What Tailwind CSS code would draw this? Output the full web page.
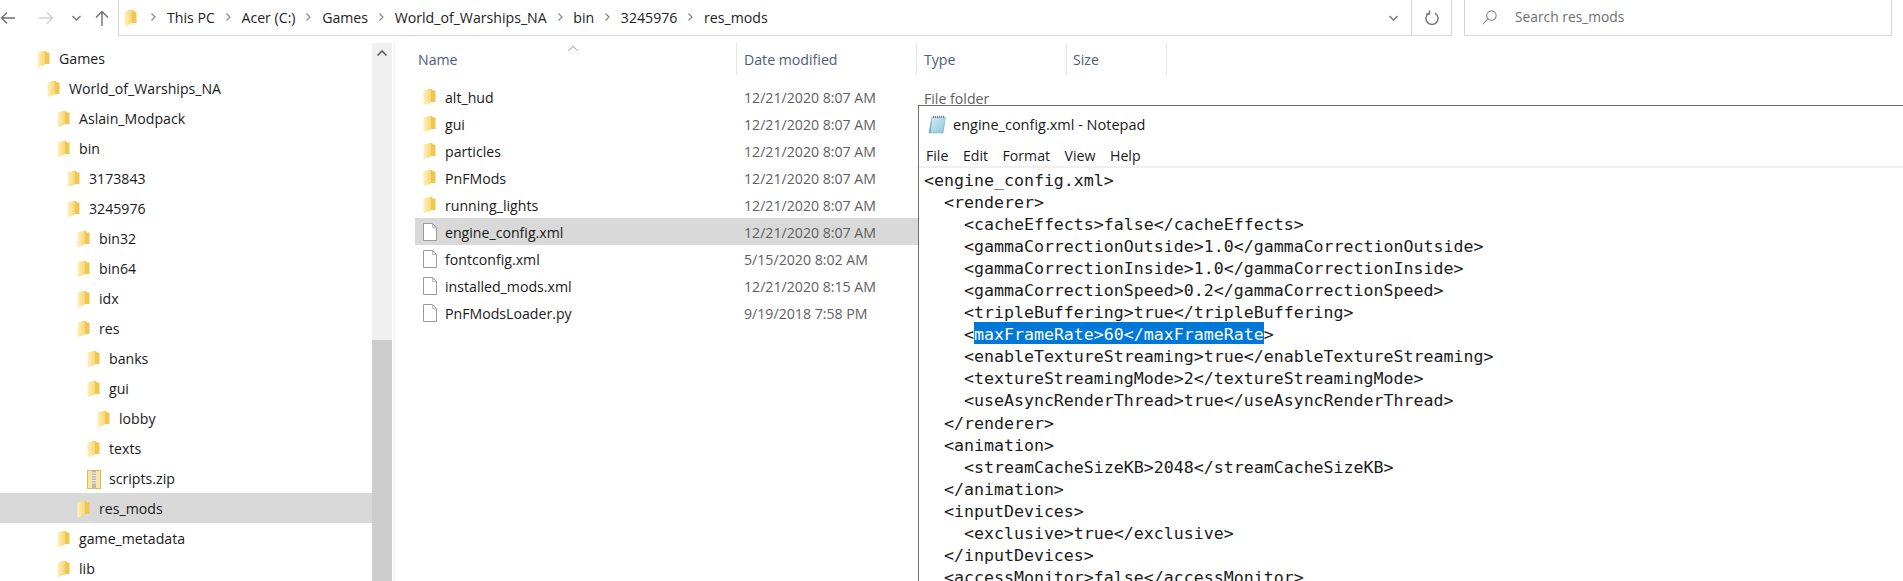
<!DOCTYPE html>
<html lang="en">
<head>
<meta charset="utf-8">
<title>res_mods</title>
<script src="https://cdn.jsdelivr.net/npm/@tailwindcss/browser@4"></script>
</head>
<body class="m-0 bg-white overflow-hidden">
<svg width="0" height="0" class="absolute">
  <defs>
    <linearGradient id="fg" x1="0" y1="0" x2="1" y2="0"><stop offset="0" stop-color="#fff0bf"/><stop offset="1" stop-color="#f8d670"/></linearGradient>
    <linearGradient id="nb" x1="0" y1="0" x2="1" y2="1"><stop offset="0" stop-color="#d4eef8"/><stop offset="1" stop-color="#8fc7dc"/></linearGradient>
    <symbol id="folder" viewBox="0 0 13 18"><path d="M7 1 H9 L10 2.5 H12.5 V14 H7 Z" fill="#f1c552"/><path d="M0.5 2.5 L8 0.5 V14.5 L0.5 17.5 Z" fill="url(#fg)"/></symbol>
    <symbol id="file" viewBox="0 0 14 18"><path d="M0.5 0.5 H9.5 L13.5 4.5 V17.5 H0.5 Z" fill="#fff" stroke="#9a9a9a"/><path d="M9.5 0.5 V4.5 H13.5" fill="none" stroke="#bdbdbd"/></symbol>
  </defs>
</svg>
<div class="relative w-[1903px] h-[581px] overflow-hidden font-['Open_Sans','Noto_Sans',sans-serif] text-[14.15px] text-[#1a1a1a]">
  <header class="flex h-[36px] items-center">
    <div class="flex items-center w-[118px] h-full shrink-0">
      <svg class="w-[16px] h-[14px]" viewBox="0 0 16 14" fill="none" stroke="#6d6d6d" stroke-width="1.3"><path d="M15 7H1.5M7 1.5L1.5 7L7 12.5"/></svg>
      <svg class="ml-[22px] w-[16px] h-[14px]" viewBox="0 0 16 14" fill="none" stroke="#cfcfcf" stroke-width="1.3"><path d="M1 7H14.5M9 1.5L14.5 7L9 12.5"/></svg>
      <svg class="ml-[18px] w-[9px] h-[6px]" viewBox="0 0 9 6" fill="none" stroke="#777" stroke-width="1.4"><path d="M0.5 1L4.5 5L8.5 1"/></svg>
      <svg class="ml-[14px] w-[14px] h-[16px]" viewBox="0 0 14 16" fill="none" stroke="#6d6d6d" stroke-width="1.4"><path d="M7 16V1.5M1 7.5L7 1.5L13 7.5"/></svg>
    </div>
    <div class="flex items-center w-[1334px] h-full border-b border-l border-r border-[#d6d6d6] shrink-0">
      <svg class="ml-[5px] w-[13px] h-[18px] shrink-0"><use href="#folder"/></svg>
      <nav class="flex items-center flex-1 text-[#222]">
        <svg class="ml-[14px] mr-[11px] w-[5px] h-[8px] shrink-0" viewBox="0 0 5 8" fill="none" stroke="#888" stroke-width="1.2"><path d="M0.5 0.5L4 4L0.5 7.5"/></svg><span>This PC</span>
        <svg class="mx-[10.8px] w-[5px] h-[8px] shrink-0" viewBox="0 0 5 8" fill="none" stroke="#888" stroke-width="1.2"><path d="M0.5 0.5L4 4L0.5 7.5"/></svg><span>Acer (C:)</span>
        <svg class="mx-[10.8px] w-[5px] h-[8px] shrink-0" viewBox="0 0 5 8" fill="none" stroke="#888" stroke-width="1.2"><path d="M0.5 0.5L4 4L0.5 7.5"/></svg><span>Games</span>
        <svg class="mx-[10.8px] w-[5px] h-[8px] shrink-0" viewBox="0 0 5 8" fill="none" stroke="#888" stroke-width="1.2"><path d="M0.5 0.5L4 4L0.5 7.5"/></svg><span>World_of_Warships_NA</span>
        <svg class="mx-[10.8px] w-[5px] h-[8px] shrink-0" viewBox="0 0 5 8" fill="none" stroke="#888" stroke-width="1.2"><path d="M0.5 0.5L4 4L0.5 7.5"/></svg><span>bin</span>
        <svg class="mx-[10.8px] w-[5px] h-[8px] shrink-0" viewBox="0 0 5 8" fill="none" stroke="#888" stroke-width="1.2"><path d="M0.5 0.5L4 4L0.5 7.5"/></svg><span>3245976</span>
        <svg class="mx-[10.8px] w-[5px] h-[8px] shrink-0" viewBox="0 0 5 8" fill="none" stroke="#888" stroke-width="1.2"><path d="M0.5 0.5L4 4L0.5 7.5"/></svg><span>res_mods</span>
      </nav>
      <svg class="mr-[13px] w-[9px] h-[6px]" viewBox="0 0 9 6" fill="none" stroke="#777" stroke-width="1.4"><path d="M0.5 1L4.5 5L8.5 1"/></svg>
      <div class="flex items-center justify-center w-[40px] h-full border-l border-[#d6d6d6]">
        <svg class="w-[14px] h-[15px]" viewBox="0 0 14 15" fill="none" stroke="#7a7a7a" stroke-width="1.5"><path d="M4 3.2A6 6 0 1 0 10 3.2M4.5 0.5V4H1"/></svg>
      </div>
    </div>
    <div class="ml-[12px] flex items-center w-[428px] h-full border-b border-l border-r border-[#d6d6d6] text-[#6f6f6f] text-[13.8px] shrink-0">
      <svg class="ml-[17px] w-[15px] h-[15px]" viewBox="0 0 14 14" fill="none" stroke="#8a8a8a" stroke-width="1"><circle cx="8.8" cy="5.2" r="4.4"/><path d="M5.6 8.3L0.7 13.3"/></svg>
      <span class="ml-[18px]">Search res_mods</span>
    </div>
  </header>

  <div class="flex mt-[7px]">
    <aside class="flex w-[395px] h-[538px] shrink-0 border-r border-[#efefef]">
      <ul class="w-[372px] shrink-0">
        <li class="flex items-center h-[30px] pt-[2px] pl-[37px]"><svg class="w-[13px] h-[18px] mr-[9px] shrink-0"><use href="#folder"/></svg>Games</li>
        <li class="flex items-center h-[30px] pt-[2px] pl-[47px]"><svg class="w-[13px] h-[18px] mr-[9px] shrink-0"><use href="#folder"/></svg>World_of_Warships_NA</li>
        <li class="flex items-center h-[30px] pt-[2px] pl-[57px]"><svg class="w-[13px] h-[18px] mr-[9px] shrink-0"><use href="#folder"/></svg>Aslain_Modpack</li>
        <li class="flex items-center h-[30px] pt-[2px] pl-[57px]"><svg class="w-[13px] h-[18px] mr-[9px] shrink-0"><use href="#folder"/></svg>bin</li>
        <li class="flex items-center h-[30px] pt-[2px] pl-[67px]"><svg class="w-[13px] h-[18px] mr-[9px] shrink-0"><use href="#folder"/></svg>3173843</li>
        <li class="flex items-center h-[30px] pt-[2px] pl-[67px]"><svg class="w-[13px] h-[18px] mr-[9px] shrink-0"><use href="#folder"/></svg>3245976</li>
        <li class="flex items-center h-[30px] pt-[2px] pl-[77px]"><svg class="w-[13px] h-[18px] mr-[9px] shrink-0"><use href="#folder"/></svg>bin32</li>
        <li class="flex items-center h-[30px] pt-[2px] pl-[77px]"><svg class="w-[13px] h-[18px] mr-[9px] shrink-0"><use href="#folder"/></svg>bin64</li>
        <li class="flex items-center h-[30px] pt-[2px] pl-[77px]"><svg class="w-[13px] h-[18px] mr-[9px] shrink-0"><use href="#folder"/></svg>idx</li>
        <li class="flex items-center h-[30px] pt-[2px] pl-[77px]"><svg class="w-[13px] h-[18px] mr-[9px] shrink-0"><use href="#folder"/></svg>res</li>
        <li class="flex items-center h-[30px] pt-[2px] pl-[87px]"><svg class="w-[13px] h-[18px] mr-[9px] shrink-0"><use href="#folder"/></svg>banks</li>
        <li class="flex items-center h-[30px] pt-[2px] pl-[87px]"><svg class="w-[13px] h-[18px] mr-[9px] shrink-0"><use href="#folder"/></svg>gui</li>
        <li class="flex items-center h-[30px] pt-[2px] pl-[97px]"><svg class="w-[13px] h-[18px] mr-[9px] shrink-0"><use href="#folder"/></svg>lobby</li>
        <li class="flex items-center h-[30px] pt-[2px] pl-[87px]"><svg class="w-[13px] h-[18px] mr-[9px] shrink-0"><use href="#folder"/></svg>texts</li>
        <li class="flex items-center h-[30px] pt-[2px] pl-[87px]">
          <svg class="w-[14px] h-[19px] mr-[8px] shrink-0" viewBox="0 0 14 19"><rect x="0.5" y="0.5" width="13" height="18" fill="#fae6a4" stroke="#dcbb5e"/><rect x="5" y="1" width="4" height="17" fill="#b9b9b9"/><path d="M5 3H9M5 5.5H9M5 8H9M5 10.5H9M5 13H9" stroke="#eee"/></svg>scripts.zip</li>
        <li class="flex items-center h-[30px] pt-[2px] pl-[77px] bg-[#d9d9d9]"><svg class="w-[13px] h-[18px] mr-[9px] shrink-0"><use href="#folder"/></svg>res_mods</li>
        <li class="flex items-center h-[30px] pt-[2px] pl-[57px]"><svg class="w-[13px] h-[18px] mr-[9px] shrink-0"><use href="#folder"/></svg>game_metadata</li>
        <li class="flex items-center h-[30px] pt-[2px] pl-[57px]"><svg class="w-[13px] h-[18px] mr-[9px] shrink-0"><use href="#folder"/></svg>lib</li>
      </ul>
      <div class="flex flex-col w-[20px] bg-[#f0f0f0] shrink-0">
        <div class="flex items-center justify-center h-[20px]"><svg class="w-[10px] h-[6px]" viewBox="0 0 10 6" fill="none" stroke="#555" stroke-width="1.5"><path d="M0.5 5.5L5 1L9.5 5.5"/></svg></div>
        <div class="mt-[277px] flex-1 bg-[#cdcdcd]"></div>
      </div>
    </aside>

    <main class="flex-1 pl-[20px]">
      <div class="flex h-[32px] text-[#4c607a]">
        <div class="relative w-[322px] pl-[3px] pt-[2px] flex items-center border-r border-[#e5e5e5]">Name
          <svg class="absolute left-[153px] top-[3px] w-[10px] h-[5px]" viewBox="0 0 10 5" fill="none" stroke="#9a9a9a"><path d="M0.5 4.5L5 0.5L9.5 4.5"/></svg>
        </div>
        <div class="w-[180px] pl-[7px] pt-[2px] flex items-center border-r border-[#e5e5e5]">Date modified</div>
        <div class="w-[150px] pl-[7px] pt-[2px] flex items-center border-r border-[#e5e5e5]">Type</div>
        <div class="w-[100px] pl-[6px] pt-[2px] flex items-center border-r border-[#e5e5e5]">Size</div>
      </div>
      <ul class="mt-[8px] w-[503px]">
        <li class="flex items-center h-[27px]"><svg class="ml-[8px] w-[13px] h-[18px] mr-[9px] shrink-0"><use href="#folder"/></svg><span class="w-[299px] pt-[2px]">alt_hud</span><span class="pt-[2px] text-[#5f5f5f]">12/21/2020 8:07 AM</span></li>
        <li class="flex items-center h-[27px]"><svg class="ml-[8px] w-[13px] h-[18px] mr-[9px] shrink-0"><use href="#folder"/></svg><span class="w-[299px] pt-[2px]">gui</span><span class="pt-[2px] text-[#5f5f5f]">12/21/2020 8:07 AM</span></li>
        <li class="flex items-center h-[27px]"><svg class="ml-[8px] w-[13px] h-[18px] mr-[9px] shrink-0"><use href="#folder"/></svg><span class="w-[299px] pt-[2px]">particles</span><span class="pt-[2px] text-[#5f5f5f]">12/21/2020 8:07 AM</span></li>
        <li class="flex items-center h-[27px]"><svg class="ml-[8px] w-[13px] h-[18px] mr-[9px] shrink-0"><use href="#folder"/></svg><span class="w-[299px] pt-[2px]">PnFMods</span><span class="pt-[2px] text-[#5f5f5f]">12/21/2020 8:07 AM</span></li>
        <li class="flex items-center h-[27px]"><svg class="ml-[8px] w-[13px] h-[18px] mr-[9px] shrink-0"><use href="#folder"/></svg><span class="w-[299px] pt-[2px]">running_lights</span><span class="pt-[2px] text-[#5f5f5f]">12/21/2020 8:07 AM</span></li>
        <li class="flex items-center h-[27px] bg-[#d9d9d9]"><svg class="ml-[8px] w-[14px] h-[18px] mr-[8px] shrink-0"><use href="#file"/></svg><span class="w-[299px] pt-[2px]">engine_config.xml</span><span class="pt-[2px] text-[#5f5f5f]">12/21/2020 8:07 AM</span></li>
        <li class="flex items-center h-[27px]"><svg class="ml-[8px] w-[14px] h-[18px] mr-[8px] shrink-0"><use href="#file"/></svg><span class="w-[299px] pt-[2px]">fontconfig.xml</span><span class="pt-[2px] text-[#5f5f5f]">5/15/2020 8:02 AM</span></li>
        <li class="flex items-center h-[27px]"><svg class="ml-[8px] w-[14px] h-[18px] mr-[8px] shrink-0"><use href="#file"/></svg><span class="w-[299px] pt-[2px]">installed_mods.xml</span><span class="pt-[2px] text-[#5f5f5f]">12/21/2020 8:15 AM</span></li>
        <li class="flex items-center h-[27px]"><svg class="ml-[8px] w-[14px] h-[18px] mr-[8px] shrink-0"><use href="#file"/></svg><span class="w-[299px] pt-[2px]">PnFModsLoader.py</span><span class="pt-[2px] text-[#5f5f5f]">9/19/2018 7:58 PM</span></li>
      </ul>
      <span class="absolute left-[924px] top-[88px] text-[#5f5f5f]">File folder</span>
    </main>
  </div>

  <section class="absolute left-[918px] top-[105px] w-[985px] h-[476px] bg-white border-l border-t border-[#707070]">
    <div class="flex items-center h-[39px] pb-[2px] pl-[9px]">
      <svg class="w-[18px] h-[19px] mr-[7px] shrink-0" viewBox="0 0 18 19"><path d="M4 2H17.5L15 18H1Z" fill="url(#nb)" stroke="#8db6c8" stroke-width="0.7"/><path d="M1 18L4 2V3L2.5 18Z" fill="#5fa3bf"/><path d="M5.5 3V0.8M7.5 3V0.8M9.5 3V0.8M11.5 3V0.8M13.5 3V0.8M15.5 3V0.8" stroke="#7d7d7d"/></svg>
      <span class="text-[14.5px] text-[#1a1a1a]">engine_config.xml - Notepad</span>
    </div>
    <div class="flex items-center h-[23px] pl-[7px] gap-[14.5px] border-b-2 border-[#f0f0f0]">
      <span>File</span><span>Edit</span><span>Format</span><span>View</span><span>Help</span>
    </div>
    <pre class="pl-[5px] pt-[2px] font-['DejaVu_Sans_Mono','Liberation_Mono',monospace] text-[16.6px] leading-[22.05px] text-[#1a1a1a]">&lt;engine_config.xml&gt;
  &lt;renderer&gt;
    &lt;cacheEffects&gt;false&lt;/cacheEffects&gt;
    &lt;gammaCorrectionOutside&gt;1.0&lt;/gammaCorrectionOutside&gt;
    &lt;gammaCorrectionInside&gt;1.0&lt;/gammaCorrectionInside&gt;
    &lt;gammaCorrectionSpeed&gt;0.2&lt;/gammaCorrectionSpeed&gt;
    &lt;tripleBuffering&gt;true&lt;/tripleBuffering&gt;
    &lt;<span class="inline-block h-[22px] -mt-[2px] pt-[2px] bg-[#0078d7] text-white align-top">maxFrameRate&gt;60&lt;/maxFrameRate</span>&gt;
    &lt;enableTextureStreaming&gt;true&lt;/enableTextureStreaming&gt;
    &lt;textureStreamingMode&gt;2&lt;/textureStreamingMode&gt;
    &lt;useAsyncRenderThread&gt;true&lt;/useAsyncRenderThread&gt;
  &lt;/renderer&gt;
  &lt;animation&gt;
    &lt;streamCacheSizeKB&gt;2048&lt;/streamCacheSizeKB&gt;
  &lt;/animation&gt;
  &lt;inputDevices&gt;
    &lt;exclusive&gt;true&lt;/exclusive&gt;
  &lt;/inputDevices&gt;
  &lt;accessMonitor&gt;false&lt;/accessMonitor&gt;</pre>
  </section>
</div>
</body>
</html>
